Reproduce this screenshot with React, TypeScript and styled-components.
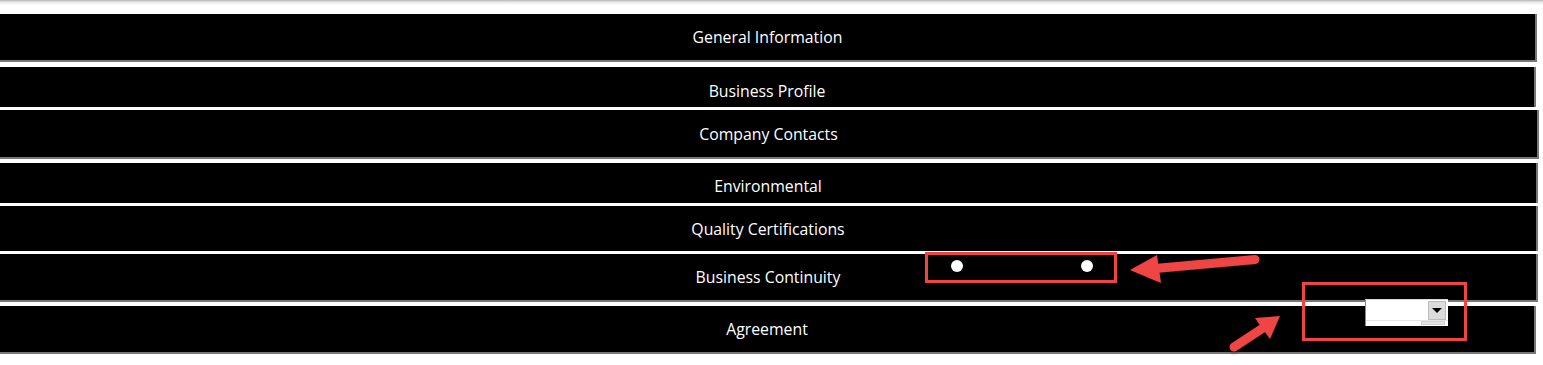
import styled, { createGlobalStyle } from 'styled-components';

const GlobalStyle = createGlobalStyle`
  html, body {
    margin: 0;
    padding: 0;
    background: #fff;
  }
  body {
    font-family: "Open Sans", Lato, sans-serif;
    overflow: hidden;
  }
`;

const Sheet = styled.div`
  position: relative;
  width: 1543px;
  height: 365px;
  box-sizing: border-box;
  padding-top: 14px;
  display: flex;
  flex-direction: column;
  background: linear-gradient(#b4b4b4 0, #e6e6e6 2px, #fff 5px);
`;

const Bar = styled.div<{ $gap: number; $h: number; $w: number; $shadow?: boolean }>`
  margin-top: ${(p) => p.$gap}px;
  width: ${(p) => p.$w}px;
  height: ${(p) => p.$h}px;
  box-sizing: content-box;
  background: #000;
  border-right: 2px solid #777;
  border-bottom: ${(p) => (p.$shadow ? '2px solid #777' : 'none')};
  display: flex;
  align-items: center;
  justify-content: center;
`;

const Label = styled.span<{ $drop: number }>`
  color: #fff;
  font-size: 15.8px;
  line-height: 18px;
  transform: translateY(${(p) => p.$drop}px);
`;

const Radio = styled.span<{ $x: number }>`
  position: absolute;
  left: ${(p) => p.$x - 6}px;
  top: 260px;
  width: 12px;
  height: 12px;
  border-radius: 50%;
  background: #fff;
`;

const Combo = styled.div`
  position: absolute;
  left: 1365px;
  top: 299px;
  width: 83px;
  height: 27px;
  box-sizing: border-box;
  background: #fff;
  border-left: 1px solid #8a8a8a;
  border-top: 1px solid #d8d8d8;
  display: flex;
  flex-direction: column;
`;

const ComboField = styled.div`
  flex: 1;
  display: flex;
  justify-content: flex-end;
  padding: 1px 2px 0 0;
`;

const ComboButton = styled.div`
  width: 18px;
  height: 19px;
  box-sizing: border-box;
  background: #dcdcdc;
  border: 1px solid #bdbdbd;
  display: flex;
  align-items: center;
  justify-content: center;

  &::after {
    content: '';
    border-left: 5px solid transparent;
    border-right: 5px solid transparent;
    border-top: 5px solid #000;
  }
`;

const ComboStrip = styled.div`
  height: 6px;
  border-top: 1px solid #e4e4e4;
  display: flex;
  justify-content: flex-end;
  padding-right: 3px;

  &::after {
    content: '';
    width: 24px;
    height: 4px;
    background: #e2e2e2;
    border: 1px solid #cfcfcf;
    box-sizing: border-box;
  }
`;

const Markup = styled.svg`
  position: absolute;
  left: 0;
  top: 0;
  pointer-events: none;
`;

const rows = [
  { label: 'General Information', gap: 0, h: 46, w: 1535, shadow: true, drop: 0 },
  { label: 'Business Profile', gap: 5, h: 40, w: 1534, shadow: false, drop: 4 },
  { label: 'Company Contacts', gap: 3, h: 47, w: 1537, shadow: true, drop: 0 },
  { label: 'Environmental', gap: 4, h: 40, w: 1536, shadow: false, drop: 3 },
  { label: 'Quality Certifications', gap: 3, h: 45, w: 1536, shadow: false, drop: 0 },
  { label: 'Business Continuity', gap: 3, h: 46, w: 1536, shadow: true, drop: 0 },
  { label: 'Agreement', gap: 4, h: 46, w: 1534, shadow: true, drop: 0 },
];

const RED = '#ef4444';

export default function App() {
  return (
    <>
      <GlobalStyle />
      <Sheet>
        {rows.map((r) => (
          <Bar key={r.label} $gap={r.gap} $h={r.h} $w={r.w} $shadow={r.shadow}>
            <Label $drop={r.drop}>{r.label}</Label>
          </Bar>
        ))}

        <Radio $x={957} />
        <Radio $x={1087} />

        <Combo>
          <ComboField>
            <ComboButton />
          </ComboField>
          <ComboStrip />
        </Combo>

        <Markup width={1543} height={365} viewBox="0 0 1543 365">
          <defs>
            <filter id="soft" x="-20%" y="-20%" width="140%" height="160%">
              <feDropShadow dx="0" dy="2" stdDeviation="1.5" floodColor="#000" floodOpacity="0.35" />
            </filter>
          </defs>
          {/* box round the radio pair */}
          <rect x={926.5} y={253.5} width={189} height={28} fill="none" stroke={RED} strokeWidth={3} />
          {/* box round the dropdown */}
          <rect x={1303.5} y={283.5} width={162} height={56} fill="none" stroke={RED} strokeWidth={3} />

          {/* arrow pointing left */}
          <g filter="url(#soft)">
            <line x1={1255} y1={259.5} x2={1155} y2={268.5} stroke={RED} strokeWidth={9} strokeLinecap="round" />
            <polygon points="1130,270 1157,255 1161,283" fill={RED} />
          </g>

          {/* arrow pointing up-right */}
          <g filter="url(#soft)">
            <line x1={1234} y1={347} x2={1263} y2={328} stroke={RED} strokeWidth={9} strokeLinecap="round" />
            <polygon points="1280,316 1255,318 1270,339" fill={RED} />
          </g>
        </Markup>
      </Sheet>
    </>
  );
}
